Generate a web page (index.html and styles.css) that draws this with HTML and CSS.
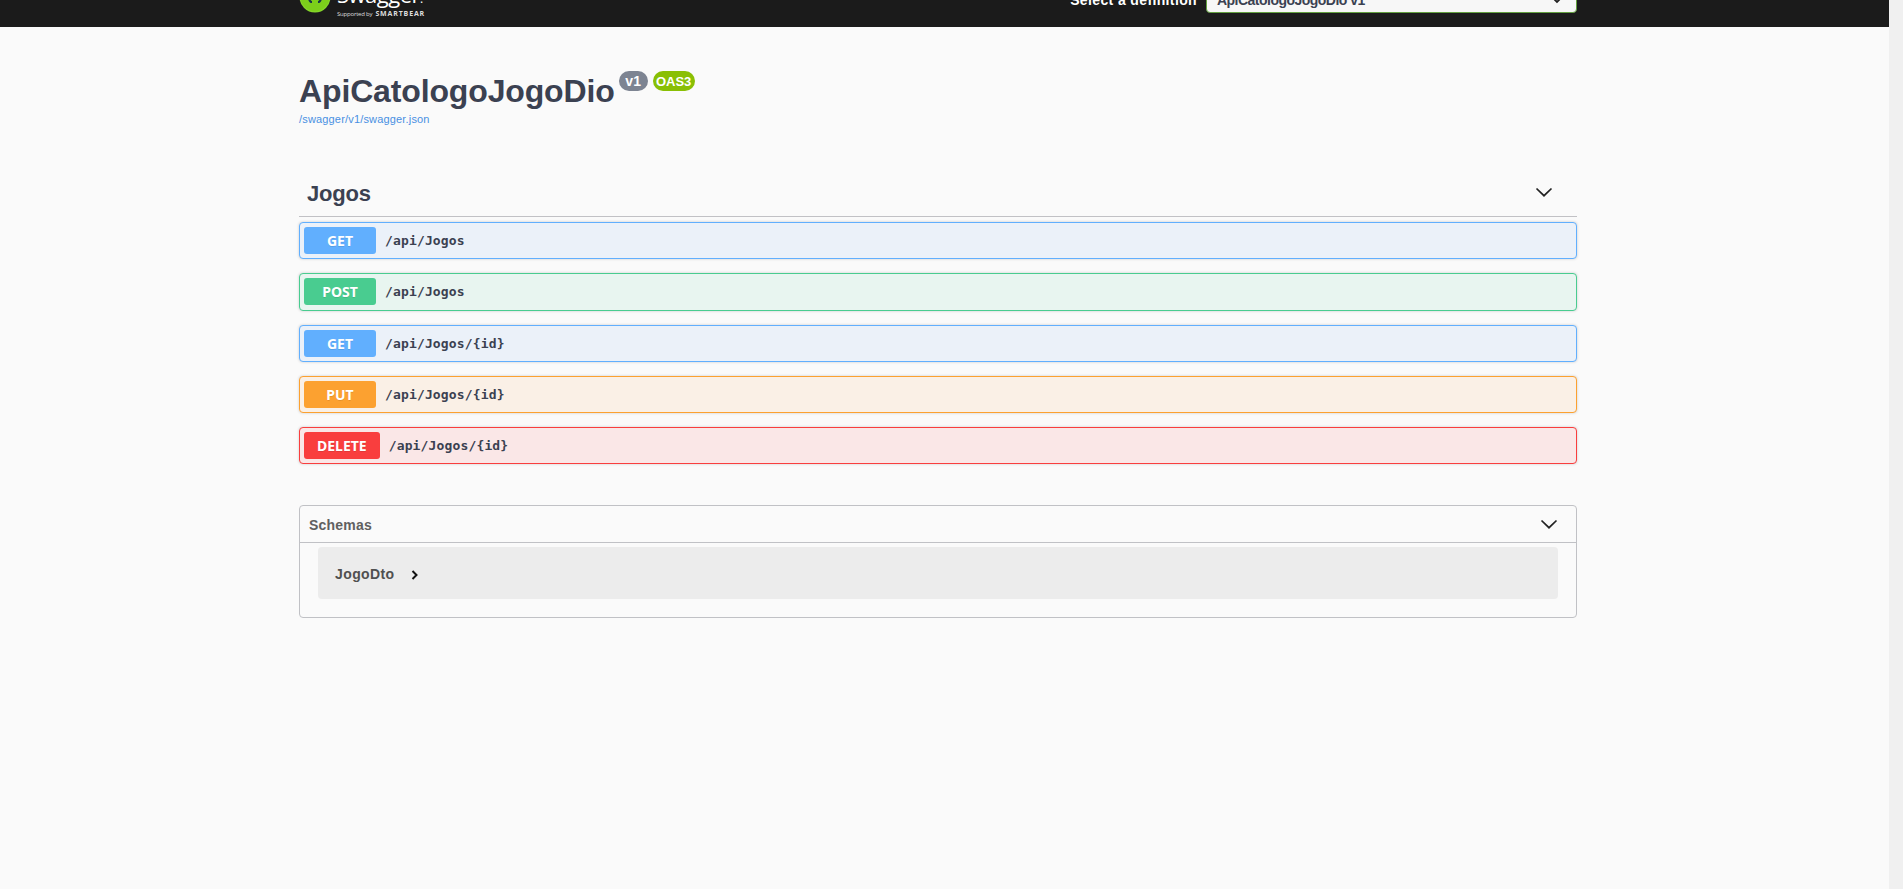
FILE: index.html
```html
<!DOCTYPE html>
<html lang="en">
<head>
<meta charset="utf-8">
<title>Swagger UI</title>
<link rel="stylesheet" href="styles.css">
</head>
<body>
<div class="page">
  <header class="topbar">
    <div class="topbar-inner">
      <div class="brand">
        <svg class="logo" width="32" height="32" viewBox="0 0 32 32"><circle cx="16" cy="16" r="15.500" fill="#85d62a"/><circle cx="16" cy="16" r="14.300" fill="#7ccf1b"/><path d="M13 9c-4 0-1.500 5.500-4.500 6.500 3 1 .5 5.500 4.500 5.500M19 9c4 0 1.500 5.500 4.500 6.500-3 1-.5 5.500-4.500 5.500" fill="none" stroke="#173647" stroke-width="2.200"/></svg>
        <div class="brand-text">
          <span class="brand-name">Swagger<small>.</small></span>
          <span class="brand-by"><span class="by">Supported by</span><b>SMARTBEAR</b></span>
        </div>
      </div>
      <div class="definition">
        <span class="definition-label">Select a definition</span>
        <div class="select"><span class="select-text">ApiCatologoJogoDio v1</span>
          <svg width="20" height="20" viewBox="0 0 20 20"><path d="M6.500 8.500 10 12l3.500-3.500" fill="none" stroke="#222" stroke-width="1.800"/></svg>
        </div>
      </div>
    </div>
  </header>
  <main class="content">
    <section class="info">
      <h1 class="title"><span class="title-text">ApiCatologoJogoDio</span><span class="badge badge-version">v1</span><span class="badge badge-oas">OAS3</span></h1>
      <a class="spec-link">/swagger/v1/swagger.json</a>
    </section>
    <section class="operations">
      <h2 class="tag"><span class="tag-text">Jogos</span><svg class="chevron" width="20" height="20" viewBox="0 0 20 20"><path d="M2.500 6.500 10 13.700l7.500-7.200" fill="none" stroke="#222" stroke-width="1.700"/></svg></h2>
      <div class="op get"><span class="method">GET</span><span class="path">/api/Jogos</span></div>
      <div class="op post"><span class="method">POST</span><span class="path">/api/Jogos</span></div>
      <div class="op get"><span class="method">GET</span><span class="path">/api/Jogos/{id}</span></div>
      <div class="op put"><span class="method">PUT</span><span class="path">/api/Jogos/{id}</span></div>
      <div class="op delete"><span class="method">DELETE</span><span class="path">/api/Jogos/{id}</span></div>
    </section>
    <section class="models">
      <h4 class="models-head"><span class="models-title">Schemas</span><svg class="chevron" width="20" height="20" viewBox="0 0 20 20"><path d="M2.500 6.500 10 13.700l7.500-7.200" fill="none" stroke="#222" stroke-width="1.700"/></svg></h4>
      <div class="model"><span class="model-name">JogoDto</span><svg width="10" height="12" viewBox="0 0 10 12"><path d="M2.500 2 6.500 6l-4 4" fill="none" stroke="#111" stroke-width="2"/></svg></div>
    </section>
  </main>
</div>
</body>
</html>
```

FILE: styles.css
```css
* { box-sizing: border-box; }
html { background: #f0f0f0; }
body { margin: 0; font-family: "Liberation Sans", Arial, sans-serif; color: #3b4151; overflow: hidden; }
.page { width: 1889px; height: 889px; background: #fafafa; }
.topbar { height: 27px; background: #1b1b1b; overflow: hidden; display: flex; flex-direction: column; justify-content: flex-end; }
.topbar-inner { width: 1278px; height: 60px; flex: none; margin-left: 299px; padding-bottom: 8px; display: flex; justify-content: space-between; align-items: flex-end; }
.brand { display: flex; align-items: flex-end; gap: 6px; color: #fff; }
.logo { margin-bottom: 6px; }
.brand-text { display: flex; flex-direction: column; }
.brand-name { font: 22px/20px "Open Sans", sans-serif; letter-spacing: -0.5px; }
.brand-name small { font-size: 12px; }
.brand-by { display: flex; align-items: center; gap: 3px; height: 10px; font: 6px/10px "Open Sans", sans-serif; color: #ddd; }
.brand-by .by { letter-spacing: -0.2px; }
.brand-by b { font-size: 7px; letter-spacing: 0.85px; }
.definition { display: flex; align-items: center; gap: 9px; margin-bottom: 6px; }
.definition-label { margin-top: 5px; font-size: 14px; font-weight: 700; color: #fff; letter-spacing: 0.37px; }
.select { width: 371px; height: 31px; display: flex; align-items: center; justify-content: space-between; padding: 4px 9px 0 10px; border: 1px solid #62a03f; border-radius: 4px; background: #f7f7f7; font-size: 14px; font-weight: 700; letter-spacing: -0.52px; }
.content { width: 1278px; margin-left: 299px; }
.info { height: 145px; padding-top: 42px; }
.title { display: flex; align-items: flex-start; margin: 0; height: 43px; }
.title-text { font-size: 32px; line-height: 44px; letter-spacing: -0.14px; }
.badge { height: 20px; margin-top: 2px; border-radius: 10px; background: #7d8492; color: #fff; font-size: 14px; line-height: 21px; text-align: center; }
.badge-version { width: 29px; margin-left: 4px; }
.badge-oas { width: 42px; margin-left: 5px; background: #89bf04; font-size: 13px; }
.spec-link { display: block; font-size: 11px; line-height: 14px; color: #4990e2; letter-spacing: 0.17px; }
.tag { display: flex; align-items: center; justify-content: space-between; height: 45px; margin: 0 0 5px; padding: 0 23px 4px 8px; border-bottom: 1px solid #c1c1c5; font-size: 22px; }
.tag-text { padding-top: 4px; letter-spacing: -0.2px; }
.op { display: flex; align-items: center; height: 37.300px; margin-bottom: 14px; padding: 0 4px; border: 1px solid; border-radius: 4px; box-shadow: 0 0 3px rgba(0,0,0,.19); }
.method { min-width: 72px; height: 27px; padding: 0 13px; border-radius: 3px; color: #fff; font: 700 14px/28px "Noto Sans", sans-serif; text-align: center; text-shadow: 0 1px 0 rgba(0,0,0,.1); }
.path { padding: 1px 0 0 9px; font: 700 13px/20px "DejaVu Sans Mono", monospace; letter-spacing: 0.15px; }
.get { border-color: #61affe; background: #ebf1f9; }
.get .method { background: #61affe; }
.post { border-color: #49cc90; background: #e8f5f0; }
.post .method { background: #49cc90; }
.put { border-color: #fca130; background: #faf0e6; }
.put .method { background: #fca130; }
.delete { border-color: #f93e3e; background: #fae7e7; }
.delete .method { background: #f93e3e; }
.models { height: 113px; margin-top: 41px; border: 1px solid #c0c1c5; border-radius: 4px; }
.models-head { display: flex; align-items: center; justify-content: space-between; height: 37px; margin: 0; padding: 0 17px 0 9px; border-bottom: 1px solid #c0c1c5; font-size: 14px; color: #606060; }
.models-title { padding-top: 1px; letter-spacing: 0.2px; }
.model { display: flex; align-items: center; gap: 15px; height: 52px; margin: 4px 18px 0; padding-left: 17px; border-radius: 4px; background: #ececec; color: #505050; font-size: 14px; font-weight: 700; letter-spacing: 0.4px; }
.model-name { padding-top: 1px; }
.model svg { margin-top: 3px; }
```
